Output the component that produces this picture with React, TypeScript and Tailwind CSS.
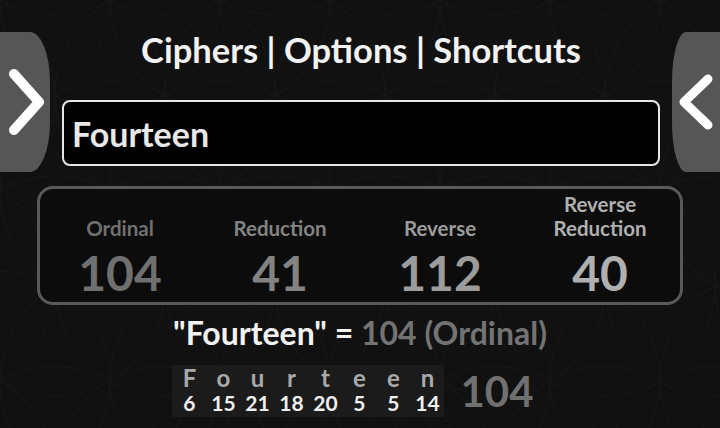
import React from 'react';

const RESULTS = [
  { label: ['Ordinal'], value: 104, color: 'text-[#707070]' },
  { label: ['Reduction'], value: 41, color: 'text-[#838383]' },
  { label: ['Reverse'], value: 112, color: 'text-[#9c9c9c]' },
  { label: ['Reverse', 'Reduction'], value: 40, color: 'text-[#b0b0b0]' },
];

const LETTERS = [
  ['F', 6],
  ['o', 15],
  ['u', 21],
  ['r', 18],
  ['t', 20],
  ['e', 5],
  ['e', 5],
  ['n', 14],
] as const;

function Backdrop() {
  // faint flower-of-life lines behind everything
  const circles: React.ReactNode[] = [];
  const r = 110;
  for (let row = -1; row < 6; row++) {
    for (let col = -1; col < 9; col++) {
      const cx = col * r + (row % 2 ? r / 2 : 0);
      const cy = row * r * 0.866;
      circles.push(<circle key={`${row}-${col}`} cx={cx} cy={cy} r={r} />);
    }
  }
  return (
    <svg className="absolute inset-0 pointer-events-none" width="720" height="428" fill="none" stroke="#171717" strokeWidth="1.2">
      {circles}
    </svg>
  );
}

export default function App() {
  return (
    <div
      className="relative w-[720px] h-[428px] overflow-hidden bg-[#111111] text-white"
      style={{ fontFamily: 'Lato, "Open Sans", sans-serif' }}
    >
      <Backdrop />

      <div className="relative flex flex-col">
        {/* Header row with side tabs */}
        <div className="flex pt-[32px]">
          <button className="w-[50px] h-[140px] shrink-0 bg-[#565656] rounded-r-[20px_50px] flex items-center justify-start pl-[7px]">
            <svg width="38" height="72" viewBox="0 0 38 72" fill="none">
              <path d="M7 8 L32 36 L7 64" stroke="#fff" strokeWidth="10" strokeLinecap="round" strokeLinejoin="round" />
            </svg>
          </button>

          <div className="flex-1 flex flex-col items-center px-[12px]">
            <h1 className="-mt-[2px] text-[34.5px] leading-[40px] font-bold text-[#f2f2f2]">
              Ciphers | Options | Shortcuts
            </h1>
            <div className="mt-[30px] w-full h-[66px] bg-black border-2 border-[#e6e6e6] rounded-[8px] flex items-center pl-[8px]">
              <span className="text-[34px] font-bold text-[#e8e8e8]">Fourteen</span>
            </div>
          </div>

          <button className="w-[48px] h-[140px] shrink-0 bg-[#565656] rounded-l-[14px_50px] flex items-center justify-start pl-[6px]">
            <svg width="36" height="60" viewBox="0 0 36 60" fill="none">
              <path d="M30 7 L6 30 L30 53" stroke="#fff" strokeWidth="9" strokeLinecap="round" strokeLinejoin="round" />
            </svg>
          </button>
        </div>

        {/* Results box */}
        <div className="mx-[37px] mt-[14px] h-[119px] border-[3px] border-[#5a5a5a] rounded-[16px] bg-[#0c0c0c] grid grid-cols-4 items-end pb-[5px]">
          {RESULTS.map((r) => (
            <div key={r.label.join(' ')} className={`flex flex-col items-center font-bold ${r.color}`}>
              {r.label.map((l) => (
                <span key={l} className="text-[20.5px] leading-[24px]">{l}</span>
              ))}
              <span className="mt-[9px] text-[48px] leading-[48px]">{r.value}</span>
            </div>
          ))}
        </div>

        {/* Equation */}
        <div className="mt-[9px] text-center text-[32px] leading-[38px] font-bold">
          <span className="text-[#f2f2f2]">"Fourteen" = </span>
          <span className="text-[#737373]">104 (Ordinal)</span>
        </div>

        {/* Letter breakdown */}
        <div className="mt-[13px] flex items-center justify-center gap-[16px] pr-[14px]">
          <div className="flex bg-[#1b1b1b] h-[52px] pt-[2px]">
            {LETTERS.map(([ch, n], i) => (
              <div key={i} className="w-[34px] flex flex-col items-center gap-[3px] font-bold">
                <span className="text-[24px] leading-[22px] text-[#a9a9a9]">{ch}</span>
                <span className="text-[21px] leading-[22px] text-[#efefef]">{n}</span>
              </div>
            ))}
          </div>
          <span className="text-[42px] leading-[44px] font-bold text-[#707070]">104</span>
        </div>
      </div>
    </div>
  );
}
